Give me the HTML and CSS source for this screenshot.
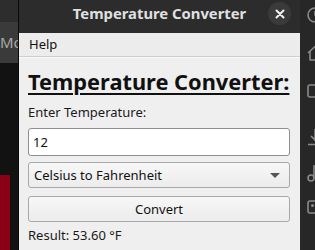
FILE: index.html
```html
<!DOCTYPE html>
<html>
<head>
<meta charset="utf-8">
<link rel="stylesheet" href="styles.css">
</head>
<body>
<div class="screen">
  <div class="left">
    <div class="l-top"></div>
    <div class="l-tab">Mo</div>
    <div class="l-dark"><div class="l-red"></div></div>
  </div>
  <div class="window">
    <div class="titlebar">
      <span class="title">Temperature Converter</span>
      <span class="close">
        <svg width="10" height="10" viewBox="0 0 10 10"><path d="M1.5 1.5 L8.5 8.5 M8.5 1.5 L1.5 8.5" stroke="#f0f0f0" stroke-width="2" stroke-linecap="round"/></svg>
      </span>
    </div>
    <div class="menubar"><span class="menu-item">Help</span></div>
    <div class="content">
      <h1 class="heading">Temperature Converter:</h1>
      <label class="label">Enter Temperature:</label>
      <div class="field">12</div>
      <div class="select"><span>Celsius to Fahrenheit</span><span class="caret"></span></div>
      <div class="button">Convert</div>
      <div class="result">Result: 53.60 °F</div>
    </div>
  </div>
  <div class="right">
    <svg class="ico" width="18" height="18" viewBox="0 0 18 18"><circle cx="9" cy="9" r="7" fill="none" stroke="#8a8a8a" stroke-width="1.6"/><path d="M9 5 V9 L12 11" fill="none" stroke="#8a8a8a" stroke-width="1.6"/></svg>
    <svg class="ico" width="18" height="18" viewBox="0 0 18 18"><path d="M2 9 L9 2.5 L16 9 M4 7.5 V16 H14 V7.5" fill="none" stroke="#8a8a8a" stroke-width="1.6" stroke-linejoin="round"/></svg>
    <svg class="ico" width="18" height="18" viewBox="0 0 18 18"><rect x="2" y="3" width="14" height="12" rx="2" fill="none" stroke="#8a8a8a" stroke-width="1.6"/></svg>
    <svg class="ico" width="18" height="18" viewBox="0 0 18 18"><path d="M9 1 V12 M5 8 L9 12 L13 8 M2 16.5 H16" fill="none" stroke="#8a8a8a" stroke-width="1.6"/></svg>
    <svg class="ico" width="18" height="18" viewBox="0 0 18 18"><circle cx="5" cy="14" r="3" fill="none" stroke="#8a8a8a" stroke-width="1.6"/><path d="M8 14 V2 H14" fill="none" stroke="#8a8a8a" stroke-width="1.6"/></svg>
    <svg class="ico" width="18" height="18" viewBox="0 0 18 18"><rect x="2" y="3" width="14" height="12" rx="2" fill="none" stroke="#8a8a8a" stroke-width="1.6"/><circle cx="6.5" cy="7.5" r="1.5" fill="#8a8a8a"/></svg>
  </div>
</div>
</body>
</html>
```
FILE: styles.css
```css
* { box-sizing: border-box; }
html, body { margin: 0; padding: 0; }
body {
  width: 315px;
  height: 250px;
  overflow: hidden;
  background: #111;
  font-family: "Noto Sans", "Open Sans", sans-serif;
}
.screen {
  display: grid;
  grid-template-columns: 18px 282px 15px;
  height: 250px;
}
.left {
  display: flex;
  flex-direction: column;
  overflow: hidden;
}
.l-top { height: 22px; background: #2d2d2d; }
.l-tab {
  height: 41px;
  background: #3a3a3a;
  color: #a8a8a8;
  font-size: 15px;
  line-height: 41px;
  white-space: nowrap;
}
.l-dark {
  flex: 1;
  background: #121212;
  display: flex;
  flex-direction: column;
  justify-content: flex-end;
}
.l-red { height: 75px; width: 10px; background: #8a0016; }

.window {
  display: flex;
  flex-direction: column;
  background: #efefef;
  border-left: 1px solid #0a0a0a;
}
.titlebar {
  height: 33px;
  background: #2c2c2c;
  display: flex;
  align-items: flex-start;
  justify-content: center;
  position: relative;
  padding-top: 2px;
}
.title {
  color: #e0e0e0;
  font-weight: bold;
  font-size: 14.8px;
  line-height: 22px;
}
.close {
  position: absolute;
  right: 9px;
  top: 2px;
  width: 23px;
  height: 23px;
  border-radius: 50%;
  background: #3a3a3a;
  display: flex;
  align-items: center;
  justify-content: center;
}
.menubar {
  height: 24px;
  background: #ececec;
  border-bottom: 1px solid #cfcfcf;
  box-shadow: 0 1px 0 #f8f8f8;
  padding-left: 10px;
  font-size: 13px;
  line-height: 23px;
  color: #111;
}
.content {
  padding: 11px 10px 0 9px;
  display: flex;
  flex-direction: column;
}
.heading {
  margin: 0;
  font-size: 21.8px;
  font-weight: bold;
  line-height: 28px;
  white-space: nowrap;
  text-decoration: underline;
  text-decoration-thickness: 2px;
  text-underline-offset: 3px;
  color: #111;
}
.label {
  margin-top: 6px;
  font-size: 13px;
  line-height: 20px;
  color: #1a1a1a;
}
.field {
  margin-top: 6px;
  height: 28px;
  background: #fff;
  border: 1px solid #8e8e8e;
  border-radius: 3px;
  padding-left: 4px;
  font-size: 13px;
  line-height: 26px;
  color: #111;
}
.select, .button {
  height: 26px;
  border: 1px solid #a8a8a8;
  border-radius: 3px;
  background: linear-gradient(#f7f7f7, #ececec);
  font-size: 13px;
  line-height: 24px;
  color: #111;
}
.select {
  margin-top: 6px;
  display: flex;
  justify-content: space-between;
  align-items: center;
  padding: 0 9px 0 5px;
}
.caret {
  width: 0;
  height: 0;
  border-left: 5px solid transparent;
  border-right: 5px solid transparent;
  border-top: 5px solid #555;
}
.button {
  margin-top: 8px;
  text-align: center;
}
.result {
  margin-top: 4px;
  font-size: 13px;
  line-height: 18px;
  color: #1a1a1a;
}
.right {
  background: #272727;
  overflow: hidden;
  display: flex;
  flex-direction: column;
  padding-left: 6px;
  padding-top: 6px;
}
.ico { flex: none; margin-bottom: 20px; }
.ico:nth-child(3) { margin-bottom: 28px; }
.ico:nth-child(4) { margin-bottom: 18px; }
.ico:nth-child(5) { margin-bottom: 16px; }
```
